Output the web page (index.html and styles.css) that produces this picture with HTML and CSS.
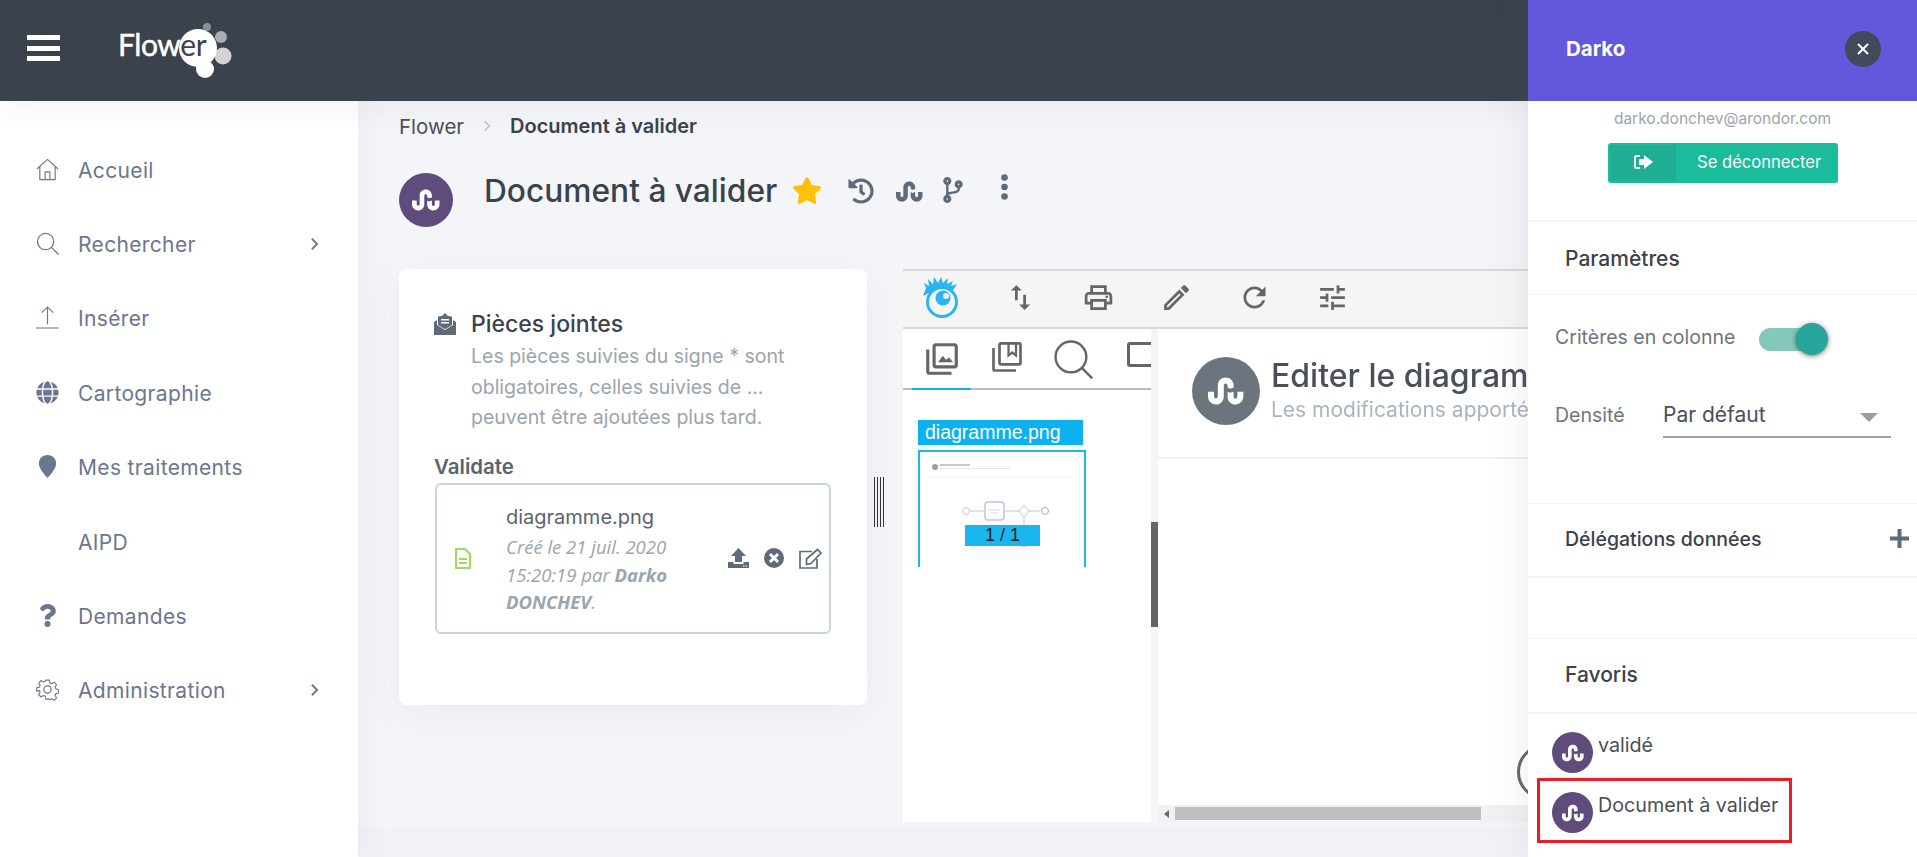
FILE: index.html
```html
<!DOCTYPE html>
<html lang="fr">
<head>
    <meta charset="UTF-8">
    <meta name="viewport" content="width=device-width, initial-scale=1.0">
    <title>Flower - Document à valider</title>
    <link rel="stylesheet" href="styles.css">
</head>
<body>
    <svg class="sprite" xmlns="http://www.w3.org/2000/svg">
        <symbol id="su" viewBox="0 0 512 512"><path d="M502.9 266v69.7c0 62.1-50.3 112.4-112.4 112.4-61.8 0-112.4-49.8-112.4-111.3v-70.2l34.3 16 51.1-15.2V338c0 14.7 12 26.5 26.7 26.5S417 352.7 417 338v-72h85.9zm-224.7-58.2l34.3 16 51.1-15.2V173c0-60.5-51.1-109-112.1-109-60.8 0-112.1 48.2-112.1 108.2v162.4c0 14.9-12 26.7-26.7 26.7S86 349.5 86 334.6V266H0v69.7C0 397.7 50.3 448 112.4 448c61.6 0 112.4-49.5 112.4-110.8V176.9c0-14.7 12-26.7 26.7-26.7s26.7 12 26.7 26.7v30.9z"/></symbol>
        <symbol id="chevron" viewBox="0 0 10 16"><path d="M2 2l6 6-6 6" fill="none" stroke="currentColor" stroke-width="2.2"/></symbol>
    </svg>

    <header class="topbar">
        <div class="burger"><span></span><span></span><span></span></div>
        <svg class="logo" width="116" height="60" viewBox="0 0 116 60">
            <defs>
                <clipPath id="blob">
                    <circle cx="80" cy="27" r="19"/><circle cx="87" cy="48" r="9"/><circle cx="89" cy="28" r="9"/>
                </clipPath>
            </defs>
            <circle cx="89" cy="6" r="4" fill="#8b9096"/>
            <circle cx="103" cy="16" r="6" fill="#a9acb0"/>
            <circle cx="105" cy="35" r="8.500" fill="#d2d3d4"/>
            <circle cx="80" cy="27" r="19" fill="#fff"/>
            <circle cx="87" cy="48" r="9" fill="#fff"/>
            <circle cx="89" cy="28" r="9" fill="#fff"/>
            <text class="logo-text" x="0" y="35" fill="#fff" stroke="#fff" stroke-width="0.5">Flower</text>
            <text class="logo-text" x="0" y="35" fill="#3b424c" clip-path="url(#blob)">Flower</text>
        </svg>
    </header>

    <div class="layout">
        <nav class="sidebar">
            <a class="nav-item">
                <svg class="nav-icon" viewBox="0 0 24 24"><path d="M1 11.5L12 1.5l11 10M4 9.5V22.5H20V9.5M9.5 22.5V14.500h5V22.500" fill="none" stroke="currentColor" stroke-width="1.2"/></svg>
                <span>Accueil</span>
            </a>
            <a class="nav-item">
                <svg class="nav-icon" viewBox="0 0 24 24"><circle cx="10" cy="10" r="8.500" fill="none" stroke="currentColor" stroke-width="1.300"/><path d="M16 16l7.500 7.500" stroke="currentColor" stroke-width="1.300"/></svg>
                <span>Rechercher</span>
                <svg class="nav-arrow"><use href="#chevron"/></svg>
            </a>
            <a class="nav-item">
                <svg class="nav-icon" viewBox="0 0 24 24"><path d="M12 1v18M6 7l6-6 6 6M0 23h24" fill="none" stroke="currentColor" stroke-width="1.200"/></svg>
                <span>Insérer</span>
            </a>
            <a class="nav-item">
                <svg class="nav-icon" viewBox="0 0 496 512"><path fill="currentColor" d="M336.5 160C322 70.700 287.800 8 248 8s-74 62.700-88.500 152h177zM152 256c0 22.200 1.200 43.500 3.300 64h185.300c2.100-20.500 3.300-41.800 3.300-64s-1.200-43.500-3.300-64H155.300c-2.100 20.500-3.300 41.800-3.300 64zm324.700-96c-28.600-67.900-86.500-120.400-158-141.600 24.400 33.800 41.200 84.700 50 141.600h108zM177.200 18.400C105.800 39.600 47.800 92.100 19.300 160h108c8.700-56.900 25.500-107.800 49.900-141.600zM487.400 192H372.700c2.100 21 3.300 42.500 3.300 64s-1.200 43-3.300 64h114.600c5.500-20.500 8.600-41.800 8.600-64s-3.100-43.500-8.500-64zM120 256c0-21.500 1.200-43 3.300-64H8.600C3.200 212.500 0 233.800 0 256s3.200 43.500 8.600 64h114.600c-2-21-3.200-42.500-3.200-64zm39.500 96c14.500 89.300 48.700 152 88.500 152s74-62.700 88.500-152h-177zm159.300 141.600c71.400-21.200 129.400-73.700 158-141.600h-108c-8.800 56.900-25.600 107.800-50 141.600zM19.300 352c28.600 67.900 86.500 120.400 158 141.600-24.400-33.800-41.200-84.700-50-141.600h-108z"/></svg>
                <span>Cartographie</span>
            </a>
            <a class="nav-item">
                <svg class="nav-icon" viewBox="0 0 24 24"><path fill="currentColor" d="M12 0C6.500 0 3 4 3 8.800c0 5 5.500 11.400 9 15.200 3.500-3.800 9-10.200 9-15.200C21 4 17.500 0 12 0z"/></svg>
                <span>Mes traitements</span>
            </a>
            <a class="nav-item">
                <span class="nav-blank"></span>
                <span>AIPD</span>
            </a>
            <a class="nav-item">
                <svg class="nav-icon" viewBox="0 0 384 512"><path fill="currentColor" d="M202.021 0C122.202 0 70.503 32.703 29.914 91.026c-7.363 10.580-5.093 25.086 5.178 32.874l43.138 32.709c10.373 7.865 25.132 6.026 33.253-4.148 25.049-31.381 43.630-49.449 82.757-49.449 30.764 0 68.816 19.799 68.816 49.631 0 22.552-18.617 34.134-48.993 51.164-35.423 19.860-82.299 44.576-82.299 106.405V320c0 13.255 10.745 24 24 24h72.471c13.255 0 24-10.745 24-24v-5.773c0-42.860 125.268-44.645 125.268-160.627C377.504 66.256 286.902 0 202.021 0zM192 373.459c-38.196 0-69.271 31.075-69.271 69.271 0 38.195 31.075 69.270 69.271 69.270s69.271-31.075 69.271-69.271-31.075-69.270-69.271-69.270z"/></svg>
                <span>Demandes</span>
            </a>
            <a class="nav-item">
                <svg class="nav-icon" viewBox="0 0 24 24"><path fill="none" stroke="currentColor" stroke-width="1.300" stroke-linejoin="round" d="M10 1h4l.7 3.200 2 .9 2.900-1.700 2.800 2.900-1.700 2.700.9 2.100 3.100.8v4l-3.100.8-.9 2.100 1.700 2.700-2.800 2.900-2.900-1.700-2 .9L14 23h-4l-.7-3.200-2-.9-2.900 1.700-2.800-2.900 1.700-2.700-.9-2.100L-.7 14v-4l3.100-.8.900-2.100-1.700-2.700 2.800-2.900 2.900 1.700 2-.9z" transform="translate(1.300 1.300) scale(.9)"/><circle cx="12" cy="12" r="3.800" fill="none" stroke="currentColor" stroke-width="1.300"/></svg>
                <span>Administration</span>
                <svg class="nav-arrow"><use href="#chevron"/></svg>
            </a>
        </nav>

        <main class="content">
            <div class="breadcrumb">
                <span class="crumb">Flower</span>
                <svg class="crumb-sep"><use href="#chevron"/></svg>
                <span class="crumb-current">Document à valider</span>
            </div>

            <div class="title-row">
                <span class="avatar avatar-big"><svg><use href="#su"/></svg></span>
                <h1 class="page-title">Document à valider</h1>
                <svg class="star" viewBox="0 0 576 512"><path fill="#ffc107" d="M259.300 17.800L194 150.200 47.900 171.500c-26.200 3.800-36.700 36.100-17.700 54.600l105.700 103-25 145.500c-4.500 26.300 23.200 46 46.400 33.700L288 439.600l130.700 68.700c23.200 12.200 50.900-7.400 46.400-33.700l-25-145.500 105.700-103c19-18.500 8.500-50.800-17.700-54.600L382 150.200 316.700 17.800c-11.700-23.600-45.600-23.900-57.400 0z"/></svg>
                <div class="title-tools">
                    <svg class="tool-history" viewBox="0 0 512 512"><path d="M504 255.531c.253 136.640-111.180 248.372-247.820 248.468-59.015.042-113.223-20.530-155.822-54.911-11.077-8.940-11.905-25.541-1.839-35.607l11.267-11.267c8.609-8.609 22.353-9.551 31.891-1.984C173.062 425.135 212.781 440 256 440c101.705 0 184-82.311 184-184 0-101.705-82.311-184-184-184-48.814 0-93.149 18.969-126.068 49.932l50.754 50.754c10.080 10.080 2.941 27.314-11.313 27.314H24c-8.837 0-16-7.163-16-16V38.627c0-14.254 17.234-21.393 27.314-11.314l49.372 49.372C129.209 34.136 189.552 8 256 8c136.810 0 247.747 110.780 248 247.531zm-180.912 78.784l9.823-12.630c8.138-10.463 6.253-25.542-4.210-33.679L288 256.349V152c0-13.255-10.745-24-24-24h-16c-13.255 0-24 10.745-24 24v135.651l65.409 50.874c10.463 8.137 25.541 6.253 33.679-4.210z"/></svg>
                    <svg class="tool-su"><use href="#su"/></svg>
                    <svg class="tool-branch" viewBox="0 0 384 512"><path d="M384 144c0-44.200-35.800-80-80-80s-80 35.800-80 80c0 36.400 24.300 67.100 57.500 76.800-.6 16.100-4.200 28.500-11 36.900-15.400 19.200-49.300 22.400-85.200 25.700-28.200 2.600-57.400 5.400-81.300 16.900v-144c32.500-10.200 56-40.500 56-76.300 0-44.200-35.800-80-80-80S0 35.800 0 80c0 35.800 23.500 66.100 56 76.300v199.300C23.500 365.900 0 396.200 0 432c0 44.200 35.800 80 80 80s80-35.800 80-80c0-34-21.200-63.100-51.200-74.600 3.100-5.200 7.800-9.800 14.900-13.400 16.200-8.200 40.400-10.400 66.100-12.800 42.200-3.900 90-8.400 118.200-43.400 14-17.400 21.100-39.800 21.600-67.900 31.600-10.800 54.400-40.700 54.400-75.900zM80 64c8.800 0 16 7.200 16 16s-7.200 16-16 16-16-7.200-16-16 7.200-16 16-16zm0 384c-8.800 0-16-7.200-16-16s7.200-16 16-16 16 7.200 16 16-7.200 16-16 16zm224-320c8.800 0 16 7.200 16 16s-7.200 16-16 16-16-7.200-16-16 7.200-16 16-16z"/></svg>
                    <svg class="tool-more" viewBox="0 0 7 26"><circle cx="3.500" cy="3.500" r="3.300"/><circle cx="3.500" cy="13" r="3.300"/><circle cx="3.500" cy="22.500" r="3.300"/></svg>
                </div>
            </div>

            <div class="columns">
                <section class="card">
                    <div class="card-head">
                        <svg class="card-icon" viewBox="0 0 22 22"><path fill="#5f6b78" d="M0 9l3-2v5l8 5 8-5V7l3 2v13H0z"/><path fill="#5f6b78" d="M4 3.500L8 3l3-3 3 3 4 .5V12l-7 4.300L4 12zM7 6v1.500h8V6zm0 3v1.500h8V9z" fill-rule="evenodd"/></svg>
                        <div>
                            <h2 class="card-title">Pièces jointes</h2>
                            <p class="card-desc">Les pièces suivies du signe * sont obligatoires, celles suivies de ... peuvent être ajoutées plus tard.</p>
                        </div>
                    </div>
                    <div class="group-label">Validate</div>
                    <div class="file-box">
                        <svg class="file-icon" viewBox="0 0 16 21"><path fill="none" stroke="#a5d85f" stroke-width="2.200" d="M1 1h9l5 5v14H1z"/><path stroke="#a5d85f" stroke-width="2" d="M4 11h8M4 15h8"/></svg>
                        <div class="file-info">
                            <div class="file-name">diagramme.png</div>
                            <div class="file-meta">Créé le 21 juil. 2020 15:20:19 par <b>Darko DONCHEV</b>.</div>
                        </div>
                        <div class="file-actions">
                            <svg width="21" height="20" viewBox="0 0 21 20"><path fill="#5f6b78" d="M10.500 0L18 8h-4v6H7V8H3zM0 14h5.500v2h10v-2H21v6H0z"/><path stroke="#fff" stroke-width="1.200" d="M15 18h1.500M17.500 18H19"/></svg>
                            <svg width="20" height="20" viewBox="0 0 20 20"><circle cx="10" cy="10" r="10" fill="#5f6b78"/><path stroke="#fff" stroke-width="3" d="M6 6l8 8M14 6l-8 8"/></svg>
                            <svg width="24" height="21" viewBox="0 0 24 21"><path fill="none" stroke="#5f6b78" stroke-width="1.700" d="M13 3.500H1v16.500h17V11"/><path fill="none" stroke="#5f6b78" stroke-width="1.700" d="M7.500 11L18.500 1.500l3.500 3.500L12 15.500l-4.500 1z"/></svg>
                        </div>
                    </div>
                </section>

                <div class="splitter"><span></span><span></span><span></span><span></span></div>

                <section class="viewer">
                    <div class="viewer-toolbar">
                        <div class="vt-btn">
                            <svg class="vt-eye" viewBox="0 0 38 44"><g fill="#2bb5ee"><path d="M3 12L1 7l5 3-1-7 5 5 1-7 4 6 3-6 2 6 5-5-1 6 6-3-2 5 6-2-4 6-7 5-9-3-8 1-6 3z"/></g><circle cx="19" cy="26" r="14.500" fill="#f5f5f5" stroke="#2bb5ee" stroke-width="3"/><circle cx="20" cy="22" r="7.500" fill="#2bb5ee"/><circle cx="23" cy="20" r="3" fill="#f5f5f5"/></svg>
                        </div>
                        <div class="vt-btn"><svg viewBox="0 0 24 24"><path d="M16 17.010V10h-2v7.010h-3L15 21l4-3.990h-3zM9 3L5 6.990h3V14h2V6.990h3L9 3z"/></svg></div>
                        <div class="vt-btn"><svg viewBox="0 0 24 24"><path d="M19 8h-1V3H6v5H5c-1.660 0-3 1.340-3 3v6h4v4h12v-4h4v-6c0-1.660-1.340-3-3-3zM8 5h8v3H8V5zm8 12v2H8v-4h8v2zm2-2v-2H6v2H4v-4c0-.55.45-1 1-1h14c.55 0 1 .45 1 1v4h-2z"/><circle cx="18" cy="11.500" r="1"/></svg></div>
                        <div class="vt-btn"><svg viewBox="0 0 24 24"><path d="M3 17.250V21h3.750L17.810 9.940l-3.750-3.750L3 17.250zM5.920 19H5v-.92l9.060-9.060.92.92L5.920 19zM20.710 5.630l-2.340-2.340c-.2-.2-.45-.29-.71-.29s-.51.1-.7.29l-1.830 1.830 3.750 3.750 1.830-1.830c.39-.39.39-1.020 0-1.410z"/></svg></div>
                        <div class="vt-btn"><svg viewBox="0 0 24 24"><path d="M17.650 6.350C16.200 4.900 14.210 4 12 4c-4.420 0-7.990 3.580-7.990 8s3.570 8 7.990 8c3.730 0 6.840-2.550 7.730-6h-2.080c-.82 2.330-3.040 4-5.650 4-3.310 0-6-2.690-6-6s2.690-6 6-6c1.660 0 3.140.69 4.220 1.780L13 11h7V4l-2.350 2.350z"/></svg></div>
                        <div class="vt-btn"><svg viewBox="0 0 24 24"><path d="M3 17v2h6v-2H3zM3 5v2h10V5H3zm10 16v-2h8v-2h-8v-2h-2v6h2zM7 9v2H3v2h4v2h2V9H7zm14 4v-2H11v2h10zm-6-4h2V7h4V5h-4V3h-2v6z"/></svg></div>
                    </div>
                    <div class="viewer-body">
                        <div class="viewer-side">
                            <div class="viewer-tabs">
                                <div class="vtab vtab-active"><svg viewBox="0 0 24 24"><path d="M22 16V4c0-1.100-.9-2-2-2H8c-1.100 0-2 .9-2 2v12c0 1.100.9 2 2 2h12c1.100 0 2-.9 2-2zm-2 0H8V4h12v12z"/><path d="M9.500 14l3-4 2 2.500 2-1.500 2.500 3z"/><path d="M4 6H2v14c0 1.100.9 2 2 2h14v-2H4V6z"/></svg></div>
                                <div class="vtab vtab-book"><svg viewBox="0 0 24 24"><g fill="none" stroke="#666" stroke-width="1.800"><rect x="7" y="2.900" width="14" height="14" rx="1"/><path d="M3 6v14c0 .6.4 1 1 1h14"/><path d="M13 3v8l2.500-2 2.500 2V3" stroke-width="1.500"/></g></svg></div>
                                <div class="vtab vtab-search"><svg viewBox="0 0 24 24"><circle cx="10.500" cy="10.500" r="9" fill="none" stroke="#666" stroke-width="1.400"/><path d="M17 17l6 6" stroke="#666" stroke-width="1.400"/></svg></div>
                                <div class="vtab vtab-cut"></div>
                            </div>
                            <div class="thumbs">
                                <div class="thumb-label">diagramme.png</div>
                                <div class="thumb">
                                    <svg class="thumb-img" width="164" height="115" viewBox="0 0 164 115">
                                        <circle cx="15" cy="15" r="3" fill="#9aa0a6"/>
                                        <rect x="20" y="12" width="30" height="2" fill="#c6c9cc"/>
                                        <rect x="20" y="16" width="70" height="1" fill="#e2e4e6"/>
                                        <path d="M6 25h150" stroke="#f3f3f5"/>
                                        <g fill="none" stroke="#c9c9c9">
                                            <circle cx="46" cy="59" r="3.500"/>
                                            <path d="M50 59h14M84 59h16M108 59h12M104 64v22"/>
                                            <path d="M104 53l5 6-5 6-5-6z"/>
                                            <circle cx="125" cy="59" r="3.500" stroke="#aaa"/>
                                            <circle cx="104" cy="91" r="4"/>
                                        </g>
                                        <rect x="65" y="50" width="19" height="18" rx="3" fill="#fff" stroke="#c5bdf0" stroke-width="1.500"/>
                                        <path d="M69 58h11M71 61h7" stroke="#ddd"/>
                                    </svg>
                                    <div class="thumb-page">1 / 1</div>
                                </div>
                            </div>
                        </div>
                        <div class="viewer-scroll"><span></span></div>
                        <div class="viewer-page">
                            <div class="doc-head">
                                <span class="avatar avatar-doc"><svg><use href="#su"/></svg></span>
                                <div>
                                    <div class="doc-title">Editer le diagramme</div>
                                    <div class="doc-sub">Les modifications apportées au diagramme</div>
                                </div>
                            </div>
                            <div class="doc-blank"><span class="doc-spinner"></span></div>
                            <div class="hscroll">
                                <span class="hscroll-arrow"></span>
                                <span class="hscroll-thumb"></span>
                            </div>
                        </div>
                    </div>
                </section>
            </div>
        </main>
    </div>

    <aside class="drawer">
        <div class="drawer-head">
            <span class="drawer-name">Darko</span>
            <span class="drawer-close">
                <svg width="12" height="12" viewBox="0 0 12 12"><path stroke="#fff" stroke-width="2" d="M1 1l10 10M11 1L1 11"/></svg>
            </span>
        </div>
        <div class="drawer-user">
            <div class="user-mail">darko.donchev@arondor.com</div>
            <div class="logout">
                <span class="logout-icon">
                    <svg width="19" height="14" viewBox="0 0 19 14"><path fill="#fff" d="M10 0l9 7-9 7v-4H5V4h5zM6 0v2H2.500C2 2 2 2.500 2 3v8c0 .5 0 1 .5 1H6v2H2.500C1 14 0 13 0 11.500v-9C0 1 1 0 2.500 0z"/></svg>
                </span>
                <span class="logout-text">Se déconnecter</span>
            </div>
        </div>
        <h3 class="drawer-title drawer-title-params">Paramètres</h3>
        <div class="settings">
            <div class="setting-row">
                <span class="setting-label">Critères en colonne</span>
                <span class="switch"><span class="switch-knob"></span></span>
            </div>
            <div class="setting-row setting-row-density">
                <span class="setting-label">Densité</span>
                <span class="select">Par défaut<i class="select-arrow"></i></span>
            </div>
        </div>
        <h3 class="drawer-title drawer-title-deleg">Délégations données
            <svg class="add" width="19" height="19" viewBox="0 0 19 19"><path stroke="#5f6b78" stroke-width="4" d="M9.500 0v19M0 9.500h19"/></svg>
        </h3>
        <div class="drawer-empty"></div>
        <h3 class="drawer-title drawer-title-fav">Favoris</h3>
        <div class="favs">
            <div class="fav">
                <span class="avatar avatar-small"><svg><use href="#su"/></svg></span>
                <span>validé</span>
            </div>
            <div class="fav fav-marked">
                <span class="avatar avatar-small"><svg><use href="#su"/></svg></span>
                <span>Document à valider</span>
            </div>
        </div>
    </aside>
</body>
</html>
```

FILE: styles.css
```css
*{
    margin: 0px;
    padding: 0px;
    box-sizing: border-box;
}

html, body{
    height: 100%;
    overflow: hidden;
}

body{
    position: relative;
    font-family: "Inter", "Open Sans", sans-serif;
    color: #3b424c;
    background-color: #f3f5f8;
}

.sprite{
    display: none;
}

/* top bar */
.topbar{
    height: 101px;
    display: flex;
    align-items: center;
    padding-left: 27px;
    background-color: #3b424c;
    position: relative;
    z-index: 2;
    box-shadow: 0 4px 30px rgba(0, 0, 0, 0.06);
}
.burger{
    width: 33px;
    display: flex;
    flex-direction: column;
    gap: 5.5px;
    margin-bottom: 5px;
}
.burger span{
    height: 5px;
    background-color: #fff;
}
.logo{
    margin-left: 58px;
}
.logo-text{
    font-family: "Lato", sans-serif;
    font-size: 30px;
    font-weight: 400;
    letter-spacing: -0.4px;
}

.layout{
    display: flex;
    height: 756px;
}

/* sidebar */
.sidebar{
    width: 358px;
    flex-shrink: 0;
    padding-top: 32px;
    background-color: #fff;
    box-shadow: 0 0 30px rgba(120, 130, 150, 0.1);
    position: relative;
}
.nav-item{
    height: 74.4px;
    display: flex;
    align-items: center;
    padding-left: 36px;
    padding-right: 39px;
    color: #6c7690;
    font-size: 21px;
    letter-spacing: 0.35px;
}
.nav-icon{
    width: 23px;
    height: 23px;
    margin-right: 19px;
    margin-top: -2px;
    flex-shrink: 0;
}
.nav-blank{
    width: 42px;
}
.nav-arrow{
    width: 9px;
    height: 14px;
    margin-left: auto;
    margin-top: -2px;
}

/* main */
.content{
    flex: 1;
    min-width: 0;
    padding-left: 41px;
    background: linear-gradient(to bottom, #f3f5f8 0, #f3f5f8 725px, #f0f2f6 730px);
}
.breadcrumb{
    height: 50px;
    display: flex;
    align-items: center;
    font-size: 20.5px;
}
.crumb{
    color: #495057;
}
.crumb-sep{
    width: 8px;
    height: 14px;
    margin: 0 19px 0 19px;
    color: #c3c8ce;
}
.crumb-current{
    font-weight: 600;
    font-size: 20px;
    color: #3b424c;
}

.title-row{
    display: flex;
    margin-top: 22px;
    height: 54px;
}
.avatar{
    display: flex;
    align-items: center;
    justify-content: center;
    border-radius: 50%;
    background-color: #5f4b7c;
    flex-shrink: 0;
}
.avatar svg{
    fill: #fff;
}
.avatar-big{
    width: 54px;
    height: 54px;
}
.avatar-big svg{
    width: 28px;
    height: 28px;
}
.page-title{
    width: 308px;
    flex-shrink: 0;
    margin-left: 31px;
    margin-top: -4px;
    font-size: 31.7px;
    font-weight: 500;
    line-height: 44px;
    white-space: nowrap;
}
.star{
    width: 30px;
    height: 27px;
    margin-top: 4px;
}
.title-tools{
    display: flex;
    margin-left: 26px;
    fill: #5f6b78;
}
.tool-history{
    width: 26px;
    height: 26px;
    margin-top: 5px;
}
.tool-su{
    width: 27px;
    height: 27px;
    margin-left: 22px;
    margin-top: 5px;
}
.tool-branch{
    width: 20px;
    height: 26px;
    margin-left: 20px;
    margin-top: 4px;
}
.tool-more{
    width: 7px;
    height: 26px;
    margin-left: 38px;
    margin-top: 1px;
}

.columns{
    display: flex;
    margin-top: 42px;
}

/* attachments card */
.card{
    width: 468px;
    height: 436px;
    flex-shrink: 0;
    padding: 0 35px;
    background-color: #fff;
    border-radius: 8px;
    box-shadow: 0 10px 40px rgba(120, 130, 150, 0.07);
}
.card-head{
    display: flex;
    padding-top: 40px;
}
.card-icon{
    width: 22px;
    height: 22px;
    margin-top: 4px;
    margin-right: 15px;
    flex-shrink: 0;
}
.card-title{
    font-size: 23px;
    font-weight: 500;
    line-height: 30px;
    color: #3b424c;
}
.card-desc{
    width: 350px;
    margin-top: 2px;
    font-size: 19.5px;
    line-height: 30.5px;
    color: #9aa5ae;
}
.group-label{
    margin-top: 21px;
    font-size: 20.5px;
    font-weight: 600;
    line-height: 26px;
    color: #5a6470;
}
.file-box{
    width: 396px;
    height: 151px;
    margin-top: 3px;
    margin-left: 1px;
    display: flex;
    align-items: center;
    padding: 0 6px 0 18px;
    border: 2px solid #c8d3e3;
    border-radius: 6px;
}
.file-icon{
    width: 16px;
    height: 21px;
    flex-shrink: 0;
    margin-right: 35px;
}
.file-info{
    width: 205px;
    margin-top: 2px;
}
.file-name{
    font-size: 20px;
    line-height: 31px;
    color: #5a6470;
}
.file-meta{
    font-family: "Open Sans", sans-serif;
    font-size: 18.5px;
    font-style: italic;
    line-height: 27.5px;
    color: #9aa5ae;
}
.file-actions{
    display: flex;
    align-items: center;
    gap: 15px;
    margin-left: auto;
}

.splitter{
    width: 36px;
    display: flex;
    gap: 2px;
    padding: 208px 0 0 7px;
}
.splitter span{
    width: 1px;
    height: 50px;
    background-color: #333;
}

/* document viewer */
.viewer{
    flex: 1;
    min-width: 0;
    height: 553px;
    display: flex;
    flex-direction: column;
    background-color: #fff;
}
.viewer-toolbar{
    height: 60px;
    display: flex;
    background-color: #f5f5f5;
    border-top: 2px solid #d8d8d8;
    border-bottom: 2px solid #d8d8d8;
}
.vt-btn{
    width: 78px;
    display: flex;
    align-items: center;
    justify-content: center;
    padding-bottom: 3px;
    fill: #666;
}
.vt-btn svg{
    width: 33px;
    height: 33px;
}
.vt-btn .vt-eye{
    width: 38px;
    height: 44px;
}
.viewer-body{
    flex: 1;
    display: flex;
    min-height: 0;
}
.viewer-side{
    width: 248px;
    flex-shrink: 0;
    overflow: hidden;
}
.viewer-tabs{
    height: 61px;
    display: flex;
    border-bottom: 2px solid #bdbdbd;
}
.vtab{
    width: 66px;
    height: 61px;
    flex-shrink: 0;
    display: flex;
    align-items: center;
    justify-content: center;
    fill: #666;
}
.vtab svg{
    width: 38px;
    height: 38px;
}
.vtab-active{
    width: 59px;
    margin-left: 9px;
    margin-right: 3px;
    border-bottom: 2px solid #0cb2f0;
}
.vtab-book{
    padding-bottom: 5px;
}
.vtab-book svg{
    width: 36px;
    height: 36px;
}
.vtab-search svg{
    width: 41px;
    height: 41px;
}
.vtab-cut{
    width: 30px;
    height: 25px;
    margin-left: 21px;
    margin-top: 13px;
    border: 3px solid #666;
    border-radius: 3px;
}
.thumbs{
    padding: 30px 0 0 15px;
    font-family: "Liberation Sans", Arial, sans-serif;
}
.thumb-label{
    width: 165px;
    height: 25px;
    padding-left: 7px;
    margin-bottom: 5px;
    font-size: 19.5px;
    line-height: 25px;
    color: #fff;
    background-color: #0cb2f0;
}
.thumb{
    width: 168px;
    height: 117px;
    position: relative;
    border: 2px solid #1ab6f0;
    border-bottom: none;
}
.thumb-img{
    display: block;
    filter: blur(0.3px);
}
.thumb-page{
    position: absolute;
    left: 45px;
    top: 73px;
    width: 75px;
    height: 21px;
    font-size: 18px;
    line-height: 21px;
    text-align: center;
    color: #222;
    background-color: #1ab6f0;
}
.viewer-scroll{
    width: 7px;
    flex-shrink: 0;
    padding-top: 193px;
    background-color: #f5f5f5;
}
.viewer-scroll span{
    display: block;
    height: 105px;
    background-color: #666;
}
.viewer-page{
    flex: 1;
    min-width: 0;
    display: flex;
    flex-direction: column;
}
.doc-head{
    height: 130px;
    display: flex;
    gap: 11px;
    padding: 28px 0 0 34px;
    border-bottom: 2px solid #eef0f4;
    filter: blur(0.5px);
}
.avatar-doc{
    width: 68px;
    height: 68px;
    background-color: #6c757d;
}
.avatar-doc svg{
    width: 36px;
    height: 36px;
}
.doc-title{
    font-size: 32px;
    font-weight: 500;
    line-height: 38px;
    white-space: nowrap;
    color: #4a5058;
}
.doc-sub{
    font-size: 21px;
    line-height: 30px;
    color: #aab4bd;
    white-space: nowrap;
}
.doc-blank{
    flex: 1;
    position: relative;
}
.doc-spinner{
    position: absolute;
    left: 359px;
    top: 285px;
    width: 56px;
    height: 56px;
    border: 3px solid #666;
    border-radius: 50%;
}
.hscroll{
    height: 17px;
    padding-left: 11px;
    display: flex;
    align-items: center;
    background-color: #f1f1f1;
}
.hscroll-arrow{
    width: 0;
    height: 0;
    margin-left: -5px;
    margin-right: 6px;
    border-top: 4px solid transparent;
    border-bottom: 4px solid transparent;
    border-right: 5px solid #666;
}
.hscroll-thumb{
    width: 306px;
    height: 13px;
    background-color: #bfbfbf;
}

/* right drawer, lies over the page */
.drawer{
    position: absolute;
    top: 0;
    right: 0;
    bottom: 0;
    width: 389px;
    z-index: 5;
    background-color: #fff;
    box-shadow: 0 0 40px rgba(90, 100, 120, 0.12);
}
.drawer-head{
    height: 101px;
    display: flex;
    align-items: center;
    justify-content: space-between;
    padding: 0 36px 4px 38px;
    background-color: #6358db;
    color: #fff;
}
.drawer-name{
    font-size: 20.5px;
    font-weight: 700;
}
.drawer-close{
    width: 36px;
    height: 36px;
    display: flex;
    align-items: center;
    justify-content: center;
    border-radius: 50%;
    background-color: #424a5c;
}
.drawer-user{
    height: 121px;
    padding-top: 7px;
    border-bottom: 2px solid #f5f5f5;
}
.user-mail{
    font-size: 15.5px;
    line-height: 22px;
    text-align: center;
    color: #9aa5ae;
}
.logout{
    width: 230px;
    height: 40px;
    margin: 13px 0 0 80px;
    display: flex;
    padding: 2px 0 2px 2px;
    border-radius: 3px;
    background-color: #1abc9c;
    color: #fff;
}
.logout-icon{
    width: 66px;
    display: flex;
    align-items: center;
    justify-content: center;
    padding-bottom: 3px;
    background-color: #1fae92;
}
.logout-text{
    margin-left: 21px;
    font-size: 16.6px;
    line-height: 34px;
}
.drawer-title{
    display: flex;
    align-items: center;
    padding-left: 37px;
    font-size: 21px;
    font-weight: 500;
    color: #3b424c;
}
.drawer-title-params{
    height: 73px;
    border-bottom: 1px solid #f5f5f5;
}
.settings{
    height: 209px;
    padding: 22px 26px 0 27px;
    border-bottom: 1px solid #f3f3f3;
}
.setting-row{
    display: flex;
    align-items: center;
    height: 40px;
}
.setting-row-density{
    margin-top: 45px;
    height: 36px;
    align-items: flex-start;
}
.setting-label{
    font-size: 19.5px;
    line-height: 26px;
    color: #6c757d;
    white-space: nowrap;
}
.switch{
    width: 62px;
    height: 23px;
    margin-left: 24px;
    margin-top: 4px;
    position: relative;
    border-radius: 12px;
    background-color: #84c8bc;
}
.switch-knob{
    position: absolute;
    right: -7px;
    top: -5px;
    width: 32px;
    height: 32px;
    border-radius: 50%;
    background-color: #26a69a;
    box-shadow: 0 1px 5px rgba(0, 0, 0, 0.55);
}
.select{
    width: 228px;
    height: 36px;
    margin-left: auto;
    position: relative;
    font-size: 21px;
    line-height: 26px;
    color: #495057;
    border-bottom: 2px solid #9e9e9e;
}
.select-arrow{
    position: absolute;
    left: 197px;
    top: 11px;
    border-left: 9px solid transparent;
    border-right: 9px solid transparent;
    border-top: 9px solid #9e9e9e;
}
.drawer-title-deleg{
    height: 74px;
    padding-bottom: 3px;
    font-size: 19.5px;
    border-bottom: 2px solid #f5f5f5;
}
.add{
    margin-left: auto;
    margin-right: 8px;
}
.drawer-empty{
    height: 61px;
    border-bottom: 1px solid #f5f5f5;
}
.drawer-title-fav{
    height: 75px;
    padding-bottom: 3px;
    border-bottom: 2px solid #f5f5f5;
}
.favs{
    padding: 18px 0 0 24px;
}
.fav{
    width: fit-content;
    display: flex;
    gap: 5px;
    height: 60px;
    position: relative;
    font-size: 19.7px;
    line-height: 26px;
    color: #495057;
}
.avatar-small{
    width: 41px;
    height: 41px;
}
.avatar-small svg{
    width: 22px;
    height: 22px;
}
.fav-marked::after{
    content: "";
    position: absolute;
    top: -14px;
    left: -15px;
    right: -14px;
    bottom: 9px;
    border: 3px solid #ed1c24;
}
```
